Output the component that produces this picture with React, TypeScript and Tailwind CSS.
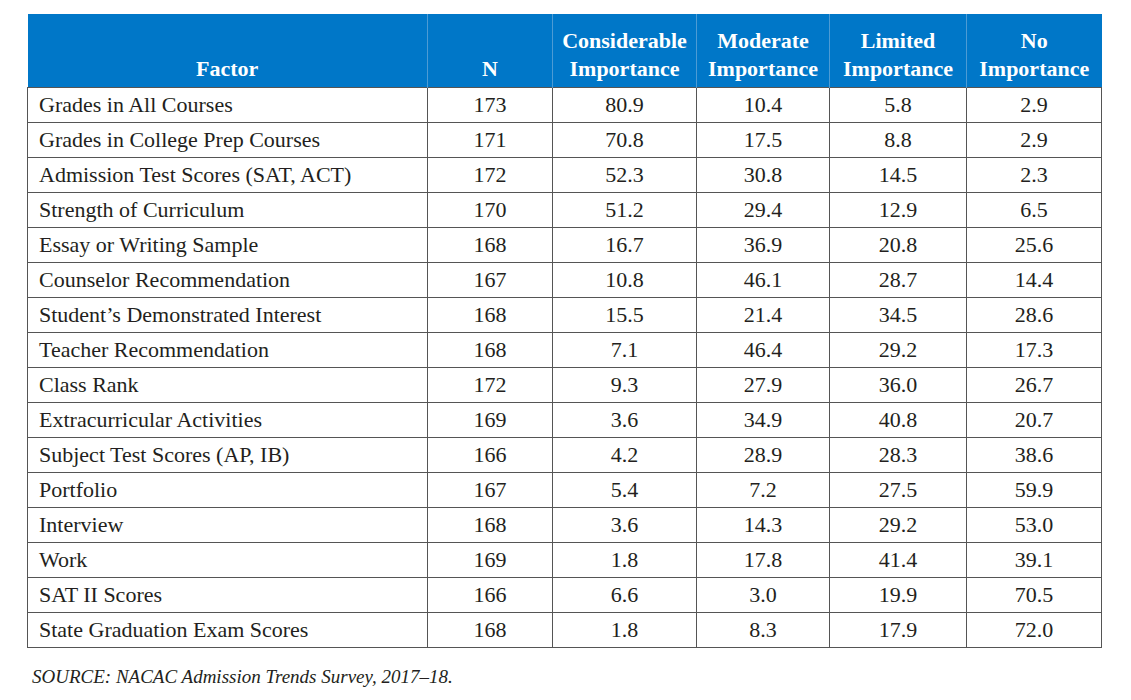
import React from "react";

const rows: [string, string, string, string, string, string][] = [
  ["Grades in All Courses", "173", "80.9", "10.4", "5.8", "2.9"],
  ["Grades in College Prep Courses", "171", "70.8", "17.5", "8.8", "2.9"],
  ["Admission Test Scores (SAT, ACT)", "172", "52.3", "30.8", "14.5", "2.3"],
  ["Strength of Curriculum", "170", "51.2", "29.4", "12.9", "6.5"],
  ["Essay or Writing Sample", "168", "16.7", "36.9", "20.8", "25.6"],
  ["Counselor Recommendation", "167", "10.8", "46.1", "28.7", "14.4"],
  ["Student’s Demonstrated Interest", "168", "15.5", "21.4", "34.5", "28.6"],
  ["Teacher Recommendation", "168", "7.1", "46.4", "29.2", "17.3"],
  ["Class Rank", "172", "9.3", "27.9", "36.0", "26.7"],
  ["Extracurricular Activities", "169", "3.6", "34.9", "40.8", "20.7"],
  ["Subject Test Scores (AP, IB)", "166", "4.2", "28.9", "28.3", "38.6"],
  ["Portfolio", "167", "5.4", "7.2", "27.5", "59.9"],
  ["Interview", "168", "3.6", "14.3", "29.2", "53.0"],
  ["Work", "169", "1.8", "17.8", "41.4", "39.1"],
  ["SAT II Scores", "166", "6.6", "3.0", "19.9", "70.5"],
  ["State Graduation Exam Scores", "168", "1.8", "8.3", "17.9", "72.0"],
];

const th = "align-bottom pb-[4px] text-center border-r border-[#4d9bd4]";
const td = "border border-[#555555] text-center";

export default function App() {
  return (
    <div className="w-[1131px] h-[700px] bg-white pt-[14px] pl-[27px] font-['Liberation_Serif',serif] text-[#231f20]">
      <table className="border-collapse table-fixed w-[1074px]">
        <colgroup>
          <col className="w-[400px]" />
          <col className="w-[125px]" />
          <col className="w-[144px]" />
          <col className="w-[133px]" />
          <col className="w-[137px]" />
          <col className="w-[135px]" />
        </colgroup>
        <thead>
          <tr className="h-[73px] bg-[#0077c8] text-white text-[22px] font-bold leading-[28px]">
            <th className={th}>Factor</th>
            <th className={th}>N</th>
            <th className={th}>
              Considerable
              <br />
              Importance
            </th>
            <th className={th}>
              Moderate
              <br />
              Importance
            </th>
            <th className={th}>
              Limited
              <br />
              Importance
            </th>
            <th className="align-bottom pb-[4px] text-center">
              No
              <br />
              Importance
            </th>
          </tr>
        </thead>
        <tbody>
          {rows.map((r, i) => (
            <tr key={i} className="h-[35px] text-[22px] leading-[26px]">
              <td className="border border-[#555555] pl-[11px] text-left whitespace-nowrap">{r[0]}</td>
              <td className={td}>{r[1]}</td>
              <td className={td}>{r[2]}</td>
              <td className={td}>{r[3]}</td>
              <td className={td}>{r[4]}</td>
              <td className={td}>{r[5]}</td>
            </tr>
          ))}
        </tbody>
      </table>
      <div className="mt-[17px] pl-[5px] italic text-[19px] leading-[24px]">
        SOURCE: NACAC Admission Trends Survey, 2017–18.
      </div>
    </div>
  );
}
